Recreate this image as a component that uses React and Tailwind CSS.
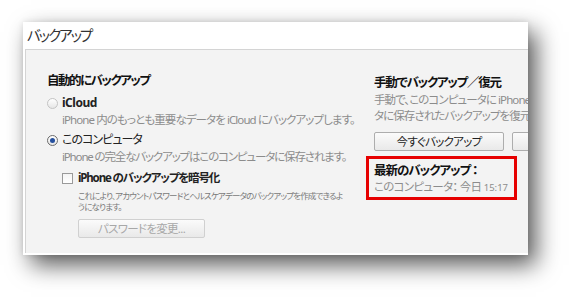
import React from "react";

const Radio = ({ checked }) => (
  <span
    className={
      "inline-flex h-[11px] w-[11px] shrink-0 items-center justify-center rounded-full border bg-gradient-to-b from-white to-[#e6e6e6] " +
      (checked ? "border-[#6b6b6b]" : "border-[#c4c4c4]")
    }
  >
    {checked && <span className="h-[5px] w-[5px] rounded-full bg-[#25509e]" />}
  </span>
);

const Button = ({ children, disabled, className = "" }) => (
  <div
    className={
      "flex h-[19px] items-center justify-center rounded-[2px] border bg-gradient-to-b from-[#fbfbfb] to-[#e9e9e9] text-[11.5px] tracking-[-0.06em] " +
      (disabled ? "border-[#d0d0d0] text-[#a8a8a8]" : "border-[#adadad] text-[#222]") +
      " " +
      className
    }
  >
    {children}
  </div>
);

export default function App() {
  return (
    <div className="h-[297px] w-[570px] overflow-hidden bg-white pl-[23px] pt-[22px] font-['Noto_Sans','Noto_Sans_CJK_JP',sans-serif] [font-feature-settings:'palt']">
      <div className="flex h-[233px] w-[505px] flex-col overflow-hidden bg-white pb-[2px] shadow-[8px_10px_22px_rgba(0,0,0,0.65),0_0_6px_rgba(0,0,0,0.1)]">
        {/* Title */}
        <div className="h-[27px] pl-[4px] pt-[4px] text-[14.5px] leading-[18px] tracking-[-0.14em] text-[#333]">
          バックアップ
        </div>

        {/* Content panel */}
        <div className="ml-[2px] flex flex-1 border-l border-t border-[#d4d4d4] bg-[#f3f3f3]">
          {/* Left column */}
          <div className="w-[340px] shrink-0 pl-[21px] pt-[22px]">
            <div className="text-[12.5px] font-bold leading-[17px] tracking-[-0.12em] text-[#111]">
              自動的にバックアップ
            </div>

            <div className="mt-[6px] flex h-[16px] items-center gap-[4px]">
              <Radio />
              <span className="text-[12px] font-bold leading-[16px] tracking-[-0.04em] text-[#222]">iCloud</span>
            </div>
            <div className="mt-[1px] whitespace-nowrap pl-[15px] text-[11.5px] leading-[16px] tracking-[-0.08em] text-[#8c8c8c]">
              iPhone 内のもっとも重要なデータを iCloud にバックアップします。
            </div>

            <div className="mt-[4px] flex h-[16px] items-center gap-[4px]">
              <Radio checked />
              <span className="text-[12px] leading-[16px] tracking-[-0.08em] text-[#222]">このコンピュータ</span>
            </div>
            <div className="mt-[1px] whitespace-nowrap pl-[15px] text-[11.5px] leading-[16px] tracking-[-0.1em] text-[#8c8c8c]">
              iPhone の完全なバックアップはこのコンピュータに保存されます。
            </div>

            <div className="mt-[5px] flex h-[16px] items-center gap-[5px] pl-[15px]">
              <span className="h-[11px] w-[11px] shrink-0 border border-[#9a9a9a] bg-gradient-to-b from-[#f4f4f4] to-white" />
              <span className="whitespace-nowrap text-[11.5px] font-bold leading-[16px] tracking-[-0.1em] text-[#222]">
                iPhone のバックアップを暗号化
              </span>
            </div>
            <div className="mt-[4px] pl-[31px] text-[8.5px] leading-[11px] tracking-[-0.1em] text-[#7a7a7a]">
              <div className="whitespace-nowrap">
                これにより、アカウントパスワードとヘルスケアデータのバックアップを作成できるよ
              </div>
              <div>うになります。</div>
            </div>
            <div className="mt-[7px] pl-[31px]">
              <Button disabled className="w-[127px]">
                パスワードを変更...
              </Button>
            </div>
          </div>

          {/* Right column */}
          <div className="min-w-0 flex-1 overflow-hidden pl-[8px] pt-[24px]">
            <div className="whitespace-nowrap text-[12.5px] font-bold leading-[17px] tracking-[-0.1em] text-[#111]">
              手動でバックアップ／復元
            </div>
            <div className="mt-[1px] whitespace-nowrap text-[11.5px] leading-[16px] tracking-[-0.08em] text-[#8c8c8c]">
              <div>手動で、このコンピュータに iPhone をバックアップするか、このコンピュー</div>
              <div>タに保存されたバックアップを復元します。</div>
            </div>
            <div className="mt-[8px] flex gap-[8px]">
              <Button className="w-[130px] shrink-0">今すぐバックアップ</Button>
              <Button className="w-[130px] shrink-0">バックアップを復元...</Button>
            </div>
            <div className="-ml-[8px] mt-[5px] h-[44px] w-[151px] border-[3px] border-[#e60000] pl-[5px] pt-[3px]">
              <div className="whitespace-nowrap text-[12.5px] font-bold leading-[17px] tracking-[-0.08em] text-[#111]">
                最新のバックアップ<span className="ml-[2px]">：</span>
              </div>
              <div className="whitespace-nowrap text-[11.5px] leading-[16px] tracking-[-0.06em] text-[#8c8c8c]">
                このコンピュータ： 今日 <span className="text-[9.5px] tracking-normal">15:17</span>
              </div>
            </div>
          </div>
        </div>
      </div>
    </div>
  );
}
